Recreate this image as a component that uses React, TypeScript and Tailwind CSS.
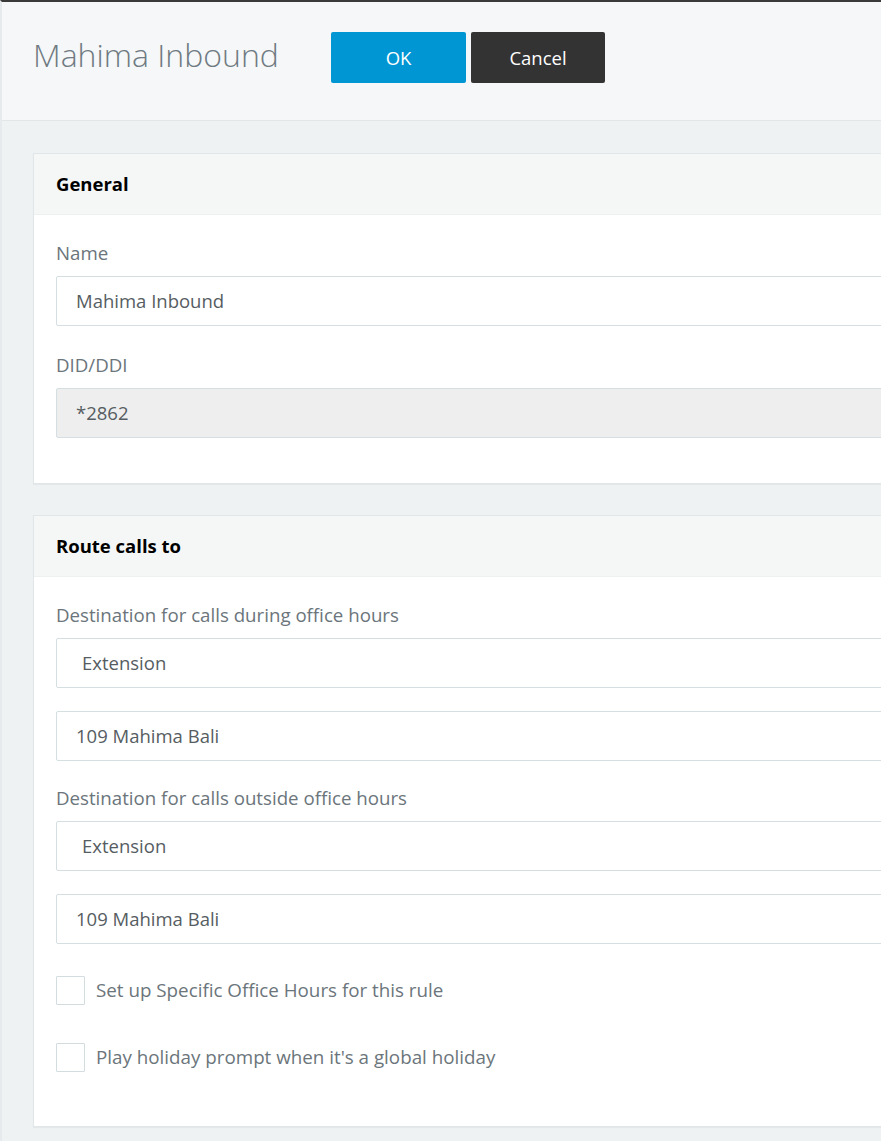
import React from 'react';

const font = { fontFamily: '"Open Sans", "Noto Sans", sans-serif' };

function Field({ label, value, disabled }: { label: string; value: string; disabled?: boolean }) {
  return (
    <div>
      <div className="text-[18.7px] leading-[22px] text-[#6b757b] mb-3">{label}</div>
      <div
        className={`h-[50px] flex items-center pl-[19px] rounded-[2px] border border-[#d5dee1] text-[18.5px] text-[#565d62] ${
          disabled ? 'bg-[#eeeeee]' : 'bg-white'
        }`}
      >
        {value}
      </div>
    </div>
  );
}

function SelectBox({ value }: { value: string }) {
  return (
    <div className="h-[50px] flex items-center pl-[25px] rounded-[2px] border border-[#d5dee1] bg-white text-[18.5px] text-[#565d62]">
      {value}
    </div>
  );
}

function TextBox({ value, className }: { value: string; className?: string }) {
  return (
    <div
      className={`h-[50px] flex items-center pl-[19px] rounded-[2px] border border-[#d5dee1] bg-white text-[18.5px] text-[#565d62] ${className ?? ''}`}
    >
      {value}
    </div>
  );
}

function Checkbox({ label }: { label: string }) {
  return (
    <label className="flex items-center gap-[11px]">
      <span className="w-[29px] h-[29px] border border-[#d3dcdf] bg-white rounded-[1px]" />
      <span className="text-[18.8px] text-[#6b757b]">{label}</span>
    </label>
  );
}

function Card({ title, children, className }: { title: string; children: React.ReactNode; className?: string }) {
  return (
    <section className={`mr-[-40px] bg-white border border-[#e1e7e9] shadow-[0_1px_1px_rgba(0,0,0,0.04)] ${className ?? ''}`}>
      <div className="h-[61px] flex items-center px-[22px] bg-[#f5f7f7] border-b border-[#edf0f1]">
        <h2 className="text-[18.5px] font-bold text-black">{title}</h2>
      </div>
      <div className="px-[22px]">{children}</div>
    </section>
  );
}

export default function App() {
  return (
    <div
      style={font}
      className="min-h-screen overflow-hidden bg-[#eef2f3] border-t-2 border-t-[#3a3a3a] border-l-2 border-l-[#e6eaec]"
    >
      {/* Header */}
      <header className="bg-[#f5f7f8] border-b border-[#e1e6e8] pt-[30px] pb-[37px] pl-[31px] flex items-center">
        <h1 className="text-[32px] font-light text-[#6f7a82] leading-none mb-[6px] w-[298px]">Mahima Inbound</h1>
        <div className="flex gap-[5px]">
          <button className="w-[135px] h-[51px] rounded-[2px] bg-[#0096d3] text-white text-[18.5px]">OK</button>
          <button className="w-[134px] h-[51px] rounded-[2px] bg-[#333333] text-white text-[18.5px]">Cancel</button>
        </div>
      </header>

      <main className="pt-[32px] pl-[31px] pb-4">
        <Card title="General">
          <div className="pt-[27px] pb-[45px] flex flex-col gap-[28px]">
            <Field label="Name" value="Mahima Inbound" />
            <Field label="DID/DDI" value="*2862" disabled />
          </div>
        </Card>

        <Card title="Route calls to" className="mt-[31px]">
          <div className="pt-[27px] pb-[54px]">
            <div className="text-[18.7px] leading-[22px] text-[#6b757b] mb-3">Destination for calls during office hours</div>
            <SelectBox value="Extension" />
            <TextBox value="109 Mahima Bali" className="mt-[23px] mb-[26px]" />
            <div className="text-[18.7px] leading-[22px] text-[#6b757b] mb-3">Destination for calls outside office hours</div>
            <SelectBox value="Extension" />
            <TextBox value="109 Mahima Bali" className="mt-[23px]" />
            <div className="mt-[32px] flex flex-col gap-[38px]">
              <Checkbox label="Set up Specific Office Hours for this rule" />
              <Checkbox label="Play holiday prompt when it's a global holiday" />
            </div>
          </div>
        </Card>
      </main>
    </div>
  );
}
